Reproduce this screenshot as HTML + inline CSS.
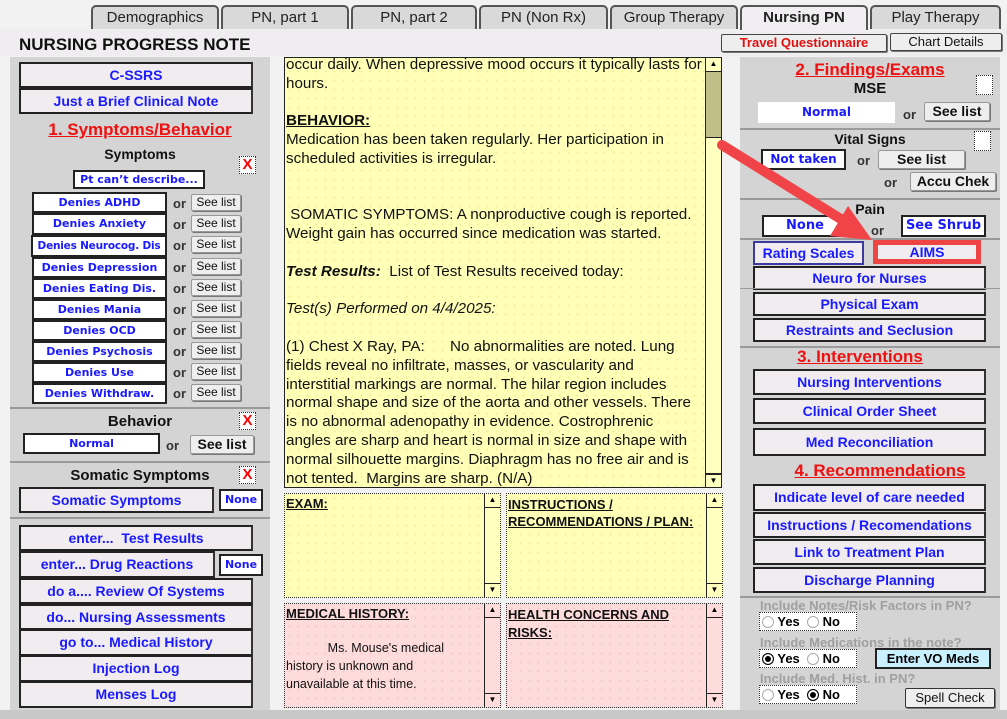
<!DOCTYPE html>
<html><head><meta charset="utf-8"><style>
*{box-sizing:border-box;margin:0;padding:0}
body{width:1007px;height:719px;overflow:hidden;background:#f2f2f2;font-family:"Liberation Sans",Arial,sans-serif;position:relative}
.a{position:absolute}
.tab{position:absolute;top:5px;height:24px;background:#d9d9d9;border:2px solid #555;border-bottom:none;border-radius:5px 5px 0 0;font-size:15px;color:#222;text-align:center;line-height:22px}
.btn{position:absolute;background:#f0ecf0;border:2px solid #222;border-right-color:#333;color:#1a1aff;font-weight:bold;font-size:14px;text-align:center;white-space:nowrap;overflow:hidden}
.wbox{position:absolute;background:#fff;border:2px solid #222;color:#1a1aff;font-weight:bold;font-size:11px;text-align:center;white-space:nowrap;overflow:hidden;font-family:"DejaVu Sans",sans-serif}
.sl{position:absolute;background:#eee;border:1px solid #999;border-radius:2px;box-shadow:1px 1px 0 #777;font-size:12px;color:#111;text-align:center;line-height:15px}
.or{position:absolute;font-size:13px;font-weight:bold;color:#333}
.lbl{position:absolute;font-size:15px;font-weight:bold;color:#111;text-align:center}
.x{position:absolute;width:17px;height:18px;border:1px dotted #333;background:#fff;color:#f00;font-weight:bold;font-size:15px;text-align:center;line-height:16px}
.hd{position:absolute;color:#f01010;font-weight:bold;font-size:17px;text-decoration:underline;text-align:center}
.sep{position:absolute;height:2px;background:#9a9a9a}
.sb{position:absolute;width:16px;background:#ffffc0;border-left:1px solid #222}
.tb{position:absolute;border:1px dotted #333;font-size:13px;color:#111;overflow:hidden}
.tb b{text-decoration:underline}
.y{background-color:#ffffb8;background-image:radial-gradient(#eeee9a 0.8px,transparent 1px);background-size:9px 9px}
.p{background-color:#ffdcdc;background-image:radial-gradient(#f0c8c8 0.8px,transparent 1px);background-size:9px 9px}
.arr{font-size:8px;text-align:center;line-height:12px;color:#000}
.grey{position:absolute;color:#a0a0a0;font-weight:bold;font-size:13px}
.rad{position:absolute;background:#fff;border:1px dotted #333;font-size:13px;font-weight:bold;height:19px;line-height:17px;padding-left:2px}
.rad i{display:inline-block;width:12px;height:12px;border-radius:50%;border:1px solid #aaa;vertical-align:-2px;background:#fff}
.rad i.on{background:#000;border-color:#000;box-shadow:inset 0 0 0 2px #fff}
</style></head><body>
<div class="a" style="left:0;top:28px;width:1007px;height:28px;background:#efedef"></div>
<div class="tab" style="left:91px;width:128px">Demographics</div>
<div class="tab" style="left:221px;width:128px">PN, part 1</div>
<div class="tab" style="left:351px;width:126px">PN, part 2</div>
<div class="tab" style="left:479px;width:129px">PN (Non Rx)</div>
<div class="tab" style="left:610px;width:128px">Group Therapy</div>
<div class="tab" style="left:740px;width:128px;background:#f0eef0;font-weight:bold;height:25px">Nursing PN</div>
<div class="tab" style="left:870px;width:131px">Play Therapy</div>
<div class="a" style="left:19px;top:35px;font-size:17px;font-weight:bold;color:#111">NURSING PROGRESS NOTE</div>
<div class="sl" style="left:721px;top:34px;width:166px;height:18px;color:#e01010;font-weight:bold;font-size:13px;border-color:#444">Travel Questionnaire</div>
<div class="sl" style="left:890px;top:33px;width:112px;height:18px;font-size:13px;border-color:#444">Chart Details</div>

<!-- LEFT PANEL -->
<div class="a" style="left:10px;top:57px;width:260px;height:653px;background:#d4d4d4"></div>
<div class="btn" style="left:19px;top:62px;width:234px;height:26px;line-height:22px">C-SSRS</div>
<div class="btn" style="left:19px;top:88px;width:234px;height:26px;line-height:22px">Just a Brief Clinical Note</div>
<div class="hd" style="left:10px;top:120px;width:260px">1. Symptoms/Behavior</div>
<div class="lbl" style="left:90px;top:146px;width:100px;font-size:14px">Symptoms</div>
<div class="x" style="left:239px;top:156px">X</div>
<div class="wbox" style="left:73px;top:170px;width:132px;height:19px;line-height:15px">Pt can’t describe...</div>
<div class="wbox" style="left:32px;top:192px;width:135px;height:21px;line-height:17px">Denies ADHD</div>
<div class="wbox" style="left:32px;top:213px;width:135px;height:22px;line-height:18px">Denies Anxiety</div>
<div class="wbox" style="left:31px;top:235px;width:136px;height:22px;line-height:18px;font-size:10.5px;letter-spacing:-0.2px">Denies Neurocog. Dis</div>
<div class="wbox" style="left:32px;top:257px;width:135px;height:21px;line-height:17px">Denies Depression</div>
<div class="wbox" style="left:32px;top:278px;width:135px;height:21px;line-height:17px">Denies Eating Dis.</div>
<div class="wbox" style="left:32px;top:299px;width:135px;height:21px;line-height:17px">Denies Mania</div>
<div class="wbox" style="left:32px;top:320px;width:135px;height:21px;line-height:17px">Denies OCD</div>
<div class="wbox" style="left:32px;top:341px;width:135px;height:21px;line-height:17px">Denies Psychosis</div>
<div class="wbox" style="left:32px;top:362px;width:135px;height:21px;line-height:17px">Denies Use</div>
<div class="wbox" style="left:32px;top:383px;width:135px;height:21px;line-height:17px">Denies Withdraw.</div>
<div class="or" style="left:173px;top:196px">or</div><div class="sl" style="left:191px;top:194px;width:50px;height:17px">See list</div>
<div class="or" style="left:173px;top:217px">or</div><div class="sl" style="left:191px;top:215px;width:50px;height:17px">See list</div>
<div class="or" style="left:173px;top:238px">or</div><div class="sl" style="left:191px;top:236px;width:50px;height:17px">See list</div>
<div class="or" style="left:173px;top:260px">or</div><div class="sl" style="left:191px;top:258px;width:50px;height:17px">See list</div>
<div class="or" style="left:173px;top:281px">or</div><div class="sl" style="left:191px;top:279px;width:50px;height:17px">See list</div>
<div class="or" style="left:173px;top:302px">or</div><div class="sl" style="left:191px;top:300px;width:50px;height:17px">See list</div>
<div class="or" style="left:173px;top:323px">or</div><div class="sl" style="left:191px;top:321px;width:50px;height:17px">See list</div>
<div class="or" style="left:173px;top:344px">or</div><div class="sl" style="left:191px;top:342px;width:50px;height:17px">See list</div>
<div class="or" style="left:173px;top:365px">or</div><div class="sl" style="left:191px;top:363px;width:50px;height:17px">See list</div>
<div class="or" style="left:173px;top:386px">or</div><div class="sl" style="left:191px;top:384px;width:50px;height:17px">See list</div>
<div class="sep" style="left:10px;top:407px;width:260px"></div>
<div class="lbl" style="left:90px;top:413px;width:100px">Behavior</div>
<div class="x" style="left:239px;top:412px">X</div>
<div class="wbox" style="left:23px;top:433px;width:137px;height:21px;line-height:17px">Normal</div>
<div class="or" style="left:166px;top:438px">or</div>
<div class="sl" style="left:190px;top:435px;width:64px;height:19px;font-size:14px;font-weight:bold;line-height:17px">See list</div>
<div class="sep" style="left:10px;top:461px;width:260px"></div>
<div class="lbl" style="left:50px;top:467px;width:180px">Somatic Symptoms</div>
<div class="x" style="left:239px;top:466px">X</div>
<div class="btn" style="left:19px;top:487px;width:195px;height:26px;line-height:22px">Somatic Symptoms</div>
<div class="wbox" style="left:219px;top:489px;width:44px;height:22px;line-height:18px">None</div>
<div class="sep" style="left:10px;top:517px;width:260px"></div>
<div class="btn" style="left:19px;top:525px;width:234px;height:26px;line-height:22px">enter...&nbsp; Test Results</div>
<div class="btn" style="left:19px;top:551px;width:196px;height:27px;line-height:23px">enter... Drug Reactions</div>
<div class="wbox" style="left:219px;top:554px;width:44px;height:22px;line-height:18px">None</div>
<div class="btn" style="left:19px;top:578px;width:234px;height:26px;line-height:22px">do a.... Review Of Systems</div>
<div class="btn" style="left:19px;top:604px;width:234px;height:26px;line-height:22px">do... Nursing Assessments</div>
<div class="btn" style="left:19px;top:629px;width:234px;height:27px;line-height:23px">go to... Medical History</div>
<div class="btn" style="left:19px;top:655px;width:234px;height:27px;line-height:23px">Injection Log</div>
<div class="btn" style="left:19px;top:681px;width:234px;height:27px;line-height:23px">Menses Log</div>

<!-- MIDDLE -->
<div class="tb y" style="left:284px;top:57px;width:438px;height:431px;border:1px solid #222;font-size:15.2px">
<div style="position:absolute;left:1px;top:-2px;width:425px;line-height:18.8px;white-space:nowrap">occur daily. When depressive mood occurs it typically lasts for<br>hours.<br><br><b>BEHAVIOR:</b><br>Medication has been taken regularly. Her participation in<br>scheduled activities is irregular.<br><br><br>&nbsp;SOMATIC SYMPTOMS: A nonproductive cough is reported.<br>Weight gain has occurred since medication was started.<br><br><i><b style="text-decoration:none">Test Results:</b></i>&nbsp; List of Test Results received today:<br><br><i>Test(s) Performed on 4/4/2025:</i><br><br>(1) Chest X Ray, PA:&nbsp;&nbsp;&nbsp;&nbsp;&nbsp; No abnormalities are noted. Lung<br>fields reveal no infiltrate, masses, or vascularity and<br>interstitial markings are normal. The hilar region includes<br>normal shape and size of the aorta and other vessels. There<br>is no abnormal adenopathy in evidence. Costrophrenic<br>angles are sharp and heart is normal in size and shape with<br>normal silhouette margins. Diaphragm has no free air and is<br>not tented.&nbsp; Margins are sharp. (N/A)</div>
<div class="sb" style="right:0;top:0;height:429px">
<div class="arr" style="border-bottom:1px solid #222;height:14px">▲</div>
<div style="background:#c0bf8a;height:66px;border-bottom:1px solid #222"></div>
<div class="arr" style="position:absolute;bottom:0;width:15px;border-top:2px solid #222;height:14px">▼</div></div>
</div>
<div class="tb y" style="left:284px;top:493px;width:217px;height:105px"><div style="padding:2px 1px;font-weight:bold"><b>EXAM:</b></div>
<div class="sb" style="right:0;top:0;height:103px"><div class="arr" style="border-bottom:1px solid #222;height:14px">▲</div><div class="arr" style="position:absolute;bottom:0;width:15px;border-top:1px solid #222;height:14px">▼</div></div></div>
<div class="tb y" style="left:506px;top:493px;width:217px;height:105px"><div style="padding:2px 1px;font-weight:bold;line-height:17px"><b>INSTRUCTIONS /<br>RECOMMENDATIONS / PLAN:</b></div>
<div class="sb" style="right:0;top:0;height:103px"><div class="arr" style="border-bottom:1px solid #222;height:14px">▲</div><div class="arr" style="position:absolute;bottom:0;width:15px;border-top:1px solid #222;height:14px">▼</div></div></div>
<div class="tb p" style="left:284px;top:603px;width:217px;height:105px"><div style="padding:2px 1px;font-weight:bold"><b>MEDICAL HISTORY:</b></div>
<div style="position:absolute;left:1px;top:35px;font-size:12.5px;line-height:18px">&nbsp;&nbsp;&nbsp;&nbsp;&nbsp;&nbsp;&nbsp;&nbsp;&nbsp;&nbsp;&nbsp;&nbsp;Ms. Mouse's medical<br>history is unknown and<br>unavailable at this time.</div>
<div class="sb" style="right:0;top:0;height:103px;background:#ffdcdc"><div class="arr" style="border-bottom:1px solid #222;height:14px">▲</div><div class="arr" style="position:absolute;bottom:0;width:15px;border-top:1px solid #222;height:14px">▼</div></div></div>
<div class="tb p" style="left:506px;top:603px;width:217px;height:105px"><div style="padding:2px 1px;font-weight:bold;line-height:18px"><b>HEALTH CONCERNS AND<br>RISKS:</b></div>
<div class="sb" style="right:0;top:0;height:103px;background:#ffdcdc"><div class="arr" style="border-bottom:1px solid #222;height:14px">▲</div><div class="arr" style="position:absolute;bottom:0;width:15px;border-top:1px solid #222;height:14px">▼</div></div></div>

<!-- RIGHT PANEL -->
<div class="a" style="left:740px;top:57px;width:260px;height:653px;background:#d4d4d4"></div>
<div class="hd" style="left:740px;top:60px;width:260px">2. Findings/Exams</div>
<div class="lbl" style="left:820px;top:80px;width:100px">MSE</div>
<div class="x" style="left:976px;top:75px;height:20px"></div>
<div class="a" style="left:758px;top:102px;width:137px;height:21px;background:#fff;color:#1a1aff;font-weight:bold;font-size:12px;text-align:center;line-height:21px;font-family:'DejaVu Sans',sans-serif">Normal</div>
<div class="or" style="left:903px;top:107px">or</div>
<div class="sl" style="left:924px;top:102px;width:66px;height:19px;font-size:14px;font-weight:bold;line-height:17px">See list</div>
<div class="sep" style="left:740px;top:128px;width:260px"></div>
<div class="lbl" style="left:820px;top:131px;width:100px;font-size:14px">Vital Signs</div>
<div class="x" style="left:974px;top:131px;height:20px"></div>
<div class="wbox" style="left:761px;top:149px;width:85px;height:21px;line-height:17px;font-size:12px">Not taken</div>
<div class="or" style="left:857px;top:153px">or</div>
<div class="sl" style="left:878px;top:150px;width:87px;height:19px;font-size:14px;font-weight:bold;line-height:17px">See list</div>
<div class="or" style="left:884px;top:175px">or</div>
<div class="sl" style="left:910px;top:172px;width:86px;height:19px;font-size:14px;font-weight:bold;line-height:17px">Accu Chek</div>
<div class="sep" style="left:740px;top:198px;width:260px"></div>
<div class="lbl" style="left:840px;top:201px;width:60px;font-size:14px">Pain</div>
<div class="wbox" style="left:762px;top:215px;width:86px;height:22px;line-height:18px;font-size:13px">None</div>
<div class="or" style="left:871px;top:223px">or</div>
<div class="wbox" style="left:901px;top:215px;width:85px;height:22px;line-height:18px;font-size:13px">See Shrub</div>
<div class="sep" style="left:740px;top:238px;width:260px"></div>
<div class="btn" style="left:753px;top:241px;width:111px;height:24px;line-height:20px;border-color:#3a3aa0">Rating Scales</div>
<div class="btn" style="left:873px;top:240px;width:108px;height:24px;line-height:20px;border:5px solid #ee4444;line-height:14px">AIMS</div>
<div class="btn" style="left:753px;top:266px;width:233px;height:24px;line-height:20px">Neuro for Nurses</div>
<div class="sep" style="left:740px;top:288px;width:260px;height:1px"></div>
<div class="btn" style="left:753px;top:292px;width:233px;height:24px;line-height:20px">Physical Exam</div>
<div class="btn" style="left:753px;top:318px;width:233px;height:24px;line-height:20px">Restraints and Seclusion</div>
<div class="sep" style="left:740px;top:346px;width:260px"></div>
<div class="hd" style="left:780px;top:347px;width:160px">3. Interventions</div>
<div class="btn" style="left:753px;top:369px;width:233px;height:26px;line-height:22px">Nursing Interventions</div>
<div class="btn" style="left:753px;top:398px;width:233px;height:26px;line-height:22px">Clinical Order Sheet</div>
<div class="btn" style="left:753px;top:428px;width:233px;height:28px;line-height:24px">Med Reconciliation</div>
<div class="hd" style="left:780px;top:461px;width:200px">4. Recommendations</div>
<div class="btn" style="left:753px;top:484px;width:233px;height:27px;line-height:23px">Indicate level of care needed</div>
<div class="btn" style="left:753px;top:512px;width:233px;height:26px;line-height:22px">Instructions / Recomendations</div>
<div class="btn" style="left:753px;top:539px;width:233px;height:26px;line-height:22px">Link to Treatment Plan</div>
<div class="btn" style="left:753px;top:567px;width:233px;height:26px;line-height:22px">Discharge Planning</div>
<div class="sep" style="left:740px;top:596px;width:260px"></div>
<div class="grey" style="left:760px;top:598px">Include Notes/Risk Factors in PN?</div>
<div class="rad" style="left:759px;top:612px;width:98px"><i></i> Yes &nbsp;<i></i> No</div>
<div class="grey" style="left:760px;top:635px">Include Medications in the note?</div>
<div class="rad" style="left:759px;top:649px;width:98px"><i class="on"></i> Yes &nbsp;<i></i> No</div>
<div class="a" style="left:875px;top:648px;width:116px;height:21px;background:#c8f0ff;border:2px solid #222;font-size:13px;font-weight:bold;text-align:center;line-height:17px">Enter VO Meds</div>
<div class="grey" style="left:760px;top:671px">Include Med. Hist. in PN?</div>
<div class="rad" style="left:759px;top:685px;width:98px"><i></i> Yes &nbsp;<i class="on"></i> No</div>
<div class="sl" style="left:905px;top:688px;width:90px;height:20px;font-size:13px;line-height:18px;border-color:#333">Spell Check</div>
<div class="a" style="left:0;top:710px;width:1007px;height:9px;background:#c8c8c8"></div>

<!-- arrow -->
<svg class="a" style="left:0;top:0" width="1007" height="719">
<line x1="722" y1="145" x2="852" y2="226" stroke="#f04448" stroke-width="10" stroke-linecap="round"/>
<polygon points="872,240 830,236 848,206" fill="#f04448"/>
</svg>
</body></html>
